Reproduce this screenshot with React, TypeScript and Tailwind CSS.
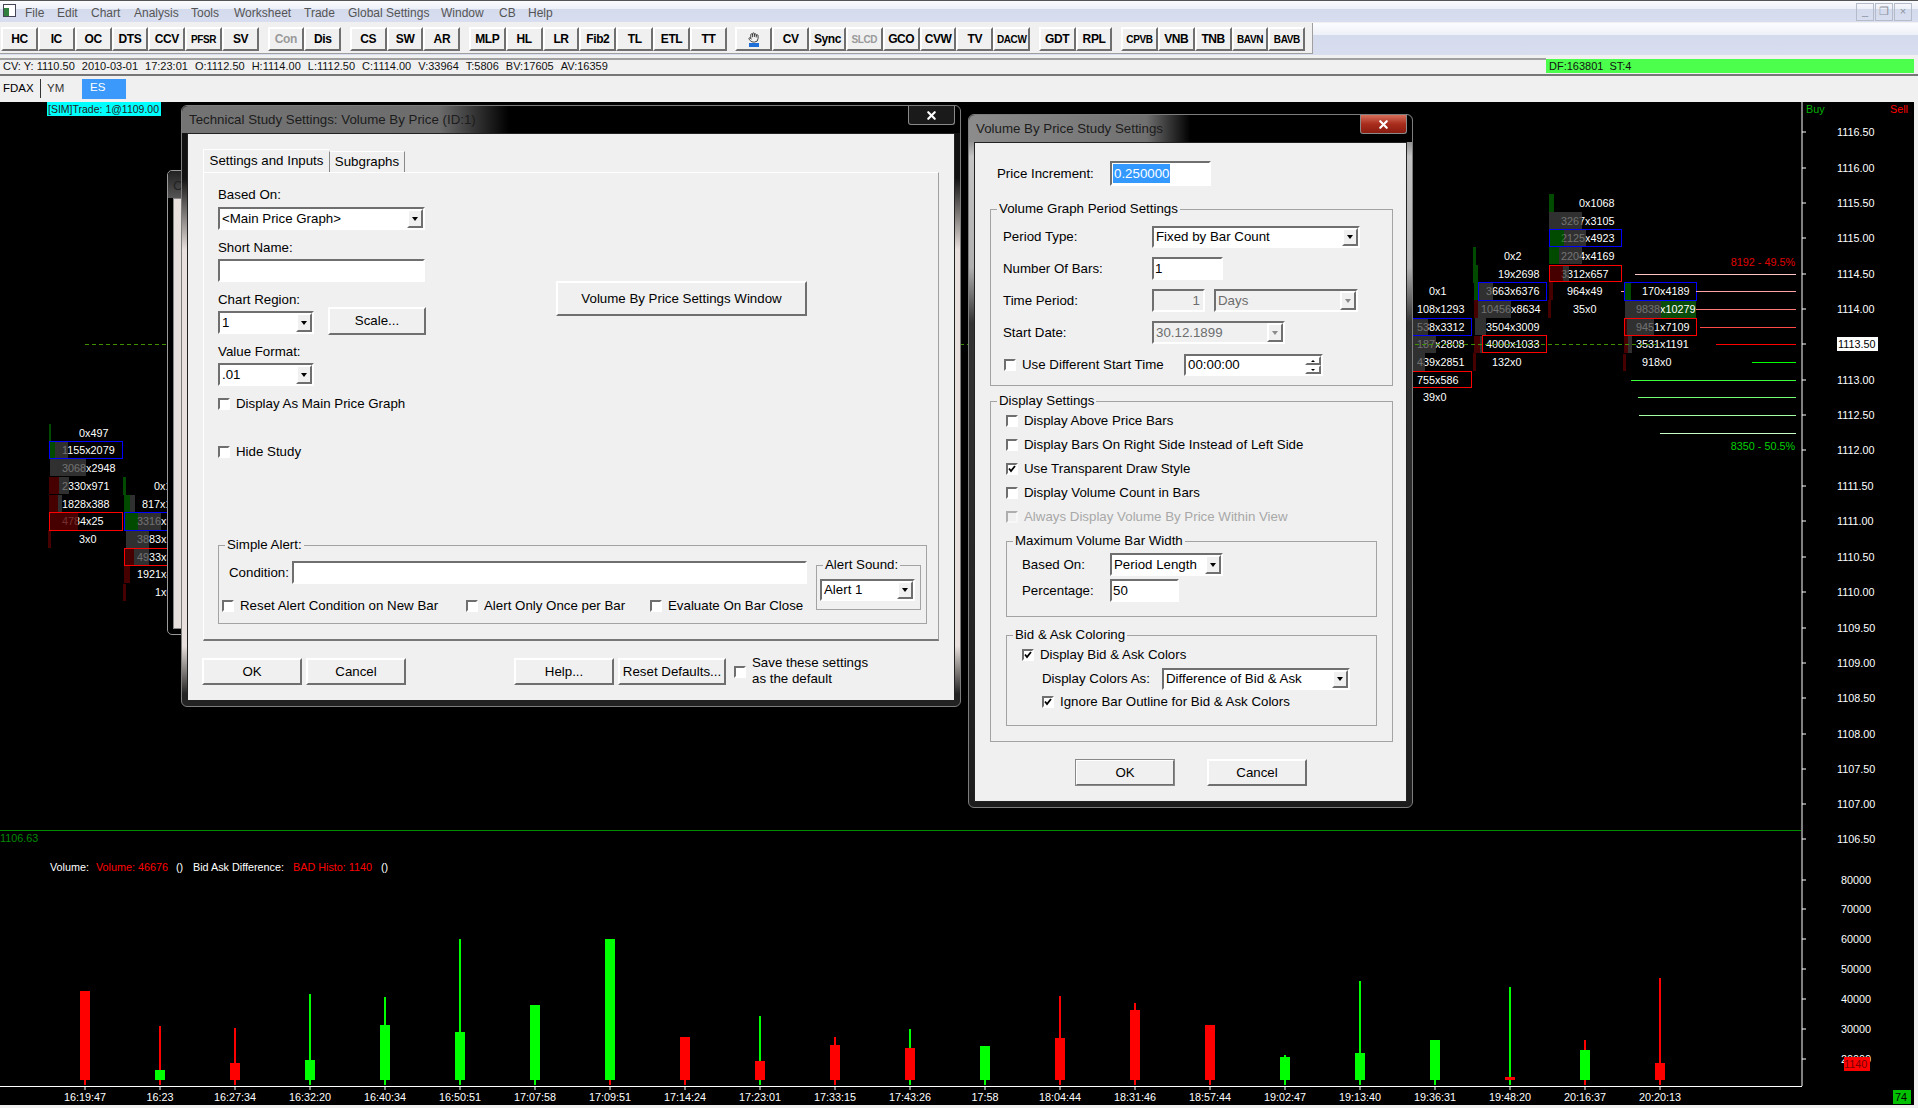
import type { ReactNode } from "react";
import { X, Hand } from "lucide-react";

const FONT = "font-['Liberation_Sans',Arial,sans-serif]";

// ── Price and volume data ─────────────────────────────────────────────
const priceLabels = [
  ["1116.50", 132], ["1116.00", 168], ["1115.50", 203], ["1115.00", 238], ["1114.50", 274],
  ["1114.00", 309], ["1113.00", 380], ["1112.50", 415], ["1112.00", 450], ["1111.50", 486],
  ["1111.00", 521], ["1110.50", 557], ["1110.00", 592], ["1109.50", 628], ["1109.00", 663],
  ["1108.50", 698], ["1108.00", 734], ["1107.50", 769], ["1107.00", 804], ["1106.50", 839],
] as const;

const volumeLabels = [
  ["80000", 880], ["70000", 909], ["60000", 939], ["50000", 969],
  ["40000", 999], ["30000", 1029], ["20000", 1059],
] as const;

const RED = "#ff0000";
const GREEN = "#00ff00";

// time, body colour, body top, wick colour, wick top, lower tick colour
const volumeBars: [string, string, number, string, number | null, string][] = [
  ["16:19:47", RED, 991, RED, null, RED],
  ["16:23", GREEN, 1070, RED, 1026, RED],
  ["16:27:34", RED, 1063, RED, 1028, RED],
  ["16:32:20", GREEN, 1060, GREEN, 994, GREEN],
  ["16:40:34", GREEN, 1025, GREEN, 997, GREEN],
  ["16:50:51", GREEN, 1032, GREEN, 939, GREEN],
  ["17:07:58", GREEN, 1005, GREEN, null, GREEN],
  ["17:09:51", GREEN, 939, GREEN, null, RED],
  ["17:14:24", RED, 1037, RED, null, RED],
  ["17:23:01", RED, 1061, GREEN, 1016, GREEN],
  ["17:33:15", RED, 1045, RED, 1037, RED],
  ["17:43:26", RED, 1048, GREEN, 1029, GREEN],
  ["17:58", GREEN, 1046, GREEN, null, GREEN],
  ["18:04:44", RED, 1038, RED, 996, RED],
  ["18:31:46", RED, 1010, RED, 1003, RED],
  ["18:57:44", RED, 1025, RED, null, RED],
  ["19:02:47", GREEN, 1057, GREEN, 1055, GREEN],
  ["19:13:40", GREEN, 1053, GREEN, 981, GREEN],
  ["19:36:31", GREEN, 1040, GREEN, null, GREEN],
  ["19:48:20", RED, 1077, GREEN, 987, GREEN],
  ["20:16:37", GREEN, 1050, RED, 1040, RED],
  ["20:20:13", RED, 1063, RED, 978, RED],
];

// ── Footprint cells ───────────────────────────────────────────────────
const cellTexts: [string, number, number][] = [
  ["0x497", 79, 433], ["1155x2079", 62, 450], ["3068x2948", 62, 468], ["2330x971", 62, 486],
  ["1828x388", 62, 504], ["4784x25", 62, 521], ["3x0", 79, 539],
  ["0x1", 154, 486], ["817x1", 142, 504], ["3316x5", 137, 521], ["3883x2", 137, 539],
  ["4933x3", 137, 557], ["1921x4", 137, 574], ["1x0", 155, 592],
  ["0x1", 1429, 291], ["108x1293", 1417, 309], ["538x3312", 1417, 327], ["187x2808", 1417, 344],
  ["439x2851", 1417, 362], ["755x586", 1417, 380], ["39x0", 1423, 397],
  ["0x2", 1504, 256], ["19x2698", 1498, 274], ["3663x6376", 1486, 291], ["10456x8634", 1481, 309],
  ["3504x3009", 1486, 327], ["4000x1033", 1486, 344], ["132x0", 1492, 362],
  ["0x1068", 1579, 203], ["3267x3105", 1561, 221], ["2125x4923", 1561, 238], ["2204x4169", 1561, 256],
  ["3312x657", 1561, 274], ["964x49", 1567, 291], ["35x0", 1573, 309],
  ["170x4189", 1642, 291], ["9838x10279", 1636, 309], ["9451x7109", 1636, 327],
  ["3531x1191", 1636, 344], ["918x0", 1642, 362],
];

const DG = "#005c00";
const DR = "#560000";
const GY = "#404040";

// x1, x2, y1, y2, colour
const cellBars: [number, number, number, number, string][] = [
  [49, 51, 424, 441, DG], [50, 55, 441, 458, DG], [55, 68, 441, 458, GY], [50, 86, 459, 476, GY],
  [49, 59, 477, 494, DR], [59, 69, 477, 494, GY], [49, 58, 495, 512, DR], [58, 62, 495, 512, GY],
  [49, 78, 512, 530, DR], [48, 51, 530, 548, DR],
  [123, 126, 477, 495, DG], [124, 130, 495, 512, DG], [130, 135, 495, 512, GY], [124, 138, 512, 530, DG],
  [138, 161, 512, 530, GY], [126, 149, 530, 548, GY], [124, 134, 548, 565, DR], [134, 149, 548, 565, GY],
  [124, 130, 566, 583, DR], [123, 126, 584, 601, DR],
  [1413, 1428, 318, 336, GY], [1413, 1436, 336, 353, GY], [1413, 1425, 353, 371, GY],
  [1473, 1476, 247, 265, DG], [1473, 1478, 265, 283, DG], [1474, 1479, 283, 300, DG], [1479, 1493, 283, 300, GY],
  [1474, 1478, 300, 318, DR], [1478, 1511, 300, 318, GY], [1475, 1486, 318, 335, GY],
  [1474, 1480, 336, 353, DR], [1480, 1483, 336, 353, GY], [1473, 1476, 353, 371, DR],
  [1549, 1554, 194, 212, DG], [1549, 1582, 212, 229, GY], [1549, 1564, 229, 246, DG], [1564, 1586, 229, 246, GY],
  [1549, 1559, 247, 264, DG], [1559, 1582, 247, 264, GY], [1549, 1563, 265, 281, DR], [1563, 1569, 265, 281, GY],
  [1549, 1553, 282, 300, DR], [1548, 1551, 300, 318, DR],
  [1624, 1631, 282, 300, DG], [1625, 1661, 300, 318, GY],
  [1624, 1627, 318, 335, DR], [1627, 1654, 318, 335, GY], [1624, 1628, 336, 353, DR], [1628, 1632, 336, 353, GY],
  [1623, 1626, 354, 371, DR],
];

// x1, x2, y1, y2, colour
const cellBoxes: [number, number, number, number, string][] = [
  [49, 122, 441, 458, "#0000ff"], [49, 122, 512, 530, RED], [124, 180, 512, 530, "#0000ff"], [124, 180, 548, 565, RED],
  [1405, 1471, 318, 335, "#0000ff"], [1405, 1471, 371, 387, RED],
  [1478, 1546, 282, 300, "#0000ff"], [1482, 1546, 335, 352, RED],
  [1549, 1621, 229, 246, "#0000ff"], [1549, 1621, 265, 281, RED],
  [1624, 1696, 282, 300, "#0000ff"], [1624, 1696, 318, 335, RED],
];

// y, start x, colour
const profileLines: [number, number, string][] = [
  [274, 1635, "#ffc4c4"], [291, 1696, "#ffa4a4"], [309, 1696, "#ff7a7a"], [327, 1700, "#ff4a4a"],
  [344, 1716, RED], [362, 1752, GREEN], [380, 1631, "#3cff3c"], [397, 1638, "#74ff74"],
  [415, 1639, "#a4ffa4"], [433, 1660, "#c8ffc8"],
];

function ChartCanvas() {
  return (
    <svg className={`absolute left-0 top-0 ${FONT} text-[10.8px]`} width={1914} height={1003} viewBox="0 102 1914 1003">
      <rect x={47} y={102} width={114} height={14} fill="#00ffff" />
      <text x={48} y={113} fill="#222" fontSize={10.5}>[SIM]Trade: 1@1109.00</text>

      {/* axis */}
      <line x1={1802} y1={102} x2={1802} y2={1086} stroke="#fff" />
      <text x={1806} y={113} fill="#00b000">Buy</text>
      <text x={1908} y={113} fill={RED} textAnchor="end">Sell</text>
      {priceLabels.map(([label, y]) => (
        <g key={label}>
          <line x1={1802} y1={y} x2={1806} y2={y} stroke="#fff" />
          <text x={1837} y={y + 4} fill="#fff">{label}</text>
        </g>
      ))}
      <line x1={1802} y1={344} x2={1806} y2={344} stroke="#fff" />
      <rect x={1837} y={337} width={41} height={14} fill="#fff" />
      <text x={1838} y={348} fill="#000">1113.50</text>

      {/* footprint: the solid green bar lies under its text, the others over it */}
      <rect x={1661} y={300} width={35} height={18} fill="#0a4d0a" />
      {cellTexts.map(([t, x, y], i) => (
        <text key={i} x={x} y={y + 4} fill="#fff">{t}</text>
      ))}
      {cellBars.map(([x1, x2, y1, y2, c], i) => (
        <rect key={i} x={x1} y={y1} width={x2 - x1} height={y2 - y1} fill={c} fillOpacity={c === GY ? 0.75 : 0.82} />
      ))}
      {cellBoxes.map(([x1, x2, y1, y2, c], i) => (
        <rect key={i} x={x1 + 0.5} y={y1 + 0.5} width={x2 - x1} height={y2 - y1} fill="none" stroke={c} />
      ))}
      {profileLines.map(([y, x, c]) => (
        <line key={y} x1={x} y1={y + 0.5} x2={1796} y2={y + 0.5} stroke={c} />
      ))}
      <line x1={1621} y1={291.5} x2={1624} y2={291.5} stroke="#ffa4a4" />
      <line x1={85} y1={344.5} x2={1660} y2={344.5} stroke="#3f8f00" strokeDasharray="4 3" />
      <text x={1795} y={266} fill="#e00000" textAnchor="end">8192 - 49.5%</text>
      <text x={1795} y={450} fill="#00d000" textAnchor="end">8350 - 50.5%</text>

      {/* volume region */}
      <line x1={0} y1={830.5} x2={1801} y2={830.5} stroke="#008a00" />
      <text x={0} y={842} fill="#008a00">1106.63</text>
      <text x={50} y={871} fill="#fff">Volume:</text>
      <text x={96} y={871} fill={RED}>Volume: 46676</text>
      <text x={176} y={871} fill="#fff">()</text>
      <text x={193} y={871} fill="#fff">Bid Ask Difference:</text>
      <text x={293} y={871} fill={RED}>BAD Histo: 1140</text>
      <text x={381} y={871} fill="#fff">()</text>

      {volumeLabels.map(([label, y]) => (
        <g key={label}>
          <line x1={1802} y1={y} x2={1806} y2={y} stroke="#fff" />
          <text x={1841} y={y + 4} fill="#fff">{label}</text>
        </g>
      ))}
      <rect x={1844} y={1057} width={26} height={14} fill={RED} />
      <text x={1844} y={1068} fill="#700">1140</text>

      {volumeBars.map(([time, body, top, wick, wickTop, low], i) => {
        const x = 85 + i * 75;
        return (
          <g key={time}>
            {wickTop !== null && <rect x={x - 1} y={wickTop} width={2} height={top - wickTop} fill={wick} />}
            <rect x={x - 5} y={top} width={10} height={1080 - top} fill={body} />
            <rect x={x - 1} y={1080} width={2} height={5} fill={low} />
            <line x1={x} y1={1086} x2={x} y2={1090} stroke="#fff" />
            <text x={x} y={1101} fill="#fff" textAnchor="middle">{time}</text>
          </g>
        );
      })}
      <line x1={0} y1={1086.5} x2={1802} y2={1086.5} stroke="#fff" />
      <rect x={1893} y={1090} width={18} height={14} fill="#00c000" />
      <text x={1895} y={1101} fill="#000">74</text>
    </svg>
  );
}

// ── Win32 style controls ──────────────────────────────────────────────
const SUNKEN = "border-2 border-t-[#6f6f6f] border-l-[#6f6f6f] border-r-white border-b-white";
const RAISED = "border-2 border-t-white border-l-white border-r-[#6f6f6f] border-b-[#6f6f6f]";

function Field({ w, h = 23, value, disabled, right }: { w: number; h?: number; value?: ReactNode; disabled?: boolean; right?: boolean }) {
  return (
    <div
      style={{ width: w, height: h }}
      className={`${SUNKEN} flex items-center px-[1px] shrink-0 whitespace-nowrap ${disabled ? "bg-[#f0f0f0] text-[#6d6d6d]" : "bg-white"} ${right ? "justify-end pr-[3px]" : ""}`}
    >
      {value}
    </div>
  );
}

function Combo({ w, h = 23, value, disabled }: { w: number; h?: number; value: string; disabled?: boolean }) {
  return (
    <div
      style={{ width: w, height: h }}
      className={`${SUNKEN} flex items-center justify-between shrink-0 whitespace-nowrap pl-[2px] ${disabled ? "bg-[#f0f0f0] text-[#6d6d6d]" : "bg-white"}`}
    >
      <span>{value}</span>
      <span className={`${RAISED} bg-[#f0f0f0] h-full w-[16px] flex items-center justify-center`}>
        <span className={`block w-0 h-0 border-x-[3.5px] border-x-transparent border-t-[4px] ${disabled ? "border-t-[#8a8a8a]" : "border-t-black"}`} />
      </span>
    </div>
  );
}

function Check({ label, checked, disabled }: { label?: string; checked?: boolean; disabled?: boolean }) {
  return (
    <div className={`flex items-center gap-[6px] h-[16px] whitespace-nowrap ${disabled ? "text-[#a8a8a8]" : ""}`}>
      <span className={`${SUNKEN} ${disabled ? "bg-[#f0f0f0] opacity-50" : "bg-white"} w-[12px] h-[12px] shrink-0 flex items-center justify-center`}>
        {checked && (
          <svg width="8" height="8" viewBox="0 0 8 8">
            <path d="M1 3.5 L3 6 L7 1" fill="none" stroke="#000" strokeWidth="1.8" />
          </svg>
        )}
      </span>
      {label}
    </div>
  );
}

function Btn({ w, h = 27, label, dark }: { w: number; h?: number; label: string; dark?: boolean }) {
  return (
    <div
      style={{ width: w, height: h }}
      className={`${RAISED} ${dark ? "outline outline-1 outline-[#888] -outline-offset-1" : ""} bg-[#f0f0f0] shrink-0 flex items-center justify-center whitespace-nowrap`}
    >
      {label}
    </div>
  );
}

function Group({ title, w, h, className = "", children }: { title: string; w: number; h: number; className?: string; children: ReactNode }) {
  return (
    <div style={{ width: w, height: h }} className={`relative border border-[#a3a3a3] shrink-0 ${className}`}>
      <span className="absolute -top-[9px] left-[6px] bg-[#f0f0f0] px-[2px] whitespace-nowrap leading-[16px]">{title}</span>
      {children}
    </div>
  );
}

function Window({
  title, className, frame, glow, closeClass, children,
}: {
  title: string; className: string; frame: string; glow: string; closeClass: string; children: ReactNode;
}) {
  return (
    <div className={`absolute flex flex-col rounded-[6px] border border-[#7d7d7d] px-[5px] pb-[5px] ${frame} ${className}`}>
      <div className={`relative h-[27px] -mx-[5px] px-[7px] pt-[4px] shrink-0 rounded-t-[6px] text-[#1c1c1c] ${glow}`}>
        {title}
        <div className={`absolute right-[5px] top-0 w-[47px] h-[19px] rounded-b-[3px] border border-t-0 border-[#8a8a8a] flex items-center justify-center ${closeClass}`}>
          <X size={13} strokeWidth={4} color="#fff" />
        </div>
      </div>
      <div className="flex-1 border border-[#222] bg-[#f0f0f0] text-black flex flex-col">{children}</div>
    </div>
  );
}

// ── Technical Study Settings dialog ───────────────────────────────────
function StudySettings() {
  return (
    <Window
      title="Technical Study Settings: Volume By Price (ID:1)"
      className="left-[181px] top-[3px] w-[780px] h-[602px]"
      frame="bg-[linear-gradient(to_bottom,#111_0,#111_12%,#e8e0dc_24%,#e8e0dc_90%,#222_98%)]"
      glow="bg-[linear-gradient(to_right,#747474,#6c6c6c_33%,#000_42%)]"
      closeClass="bg-[#1a1a1a]"
    >
      <div className="ml-[15px] mt-[15px] flex items-end h-[23px]">
        <div className="h-[23px] w-[126px] border-l border-t border-white flex items-center justify-center whitespace-nowrap">Settings and Inputs</div>
        <div className="h-[21px] w-[76px] border-t border-r border-l border-t-white border-r-[#888] border-l-[#888] flex items-center justify-center">Subgraphs</div>
      </div>

      <div className="ml-[15px] w-[736px] h-[469px] border border-t-white border-l-white border-r-[#a0a0a0] border-b-[#777] border-b-2">
        <div className="flex h-[372px] pl-[14px]">
          <div className="w-[338px] flex flex-col">
            <div className="mt-[14px] h-[15px] leading-[15px]">Based On:</div>
            <div className="mt-[5px]"><Combo w={207} value="<Main Price Graph>" /></div>
            <div className="mt-[10px] h-[15px] leading-[15px]">Short Name:</div>
            <div className="mt-[4px]"><Field w={207} /></div>
            <div className="mt-[10px] h-[15px] leading-[15px]">Chart Region:</div>
            <div className="flex items-start h-[28px]">
              <div className="mt-[4px]"><Combo w={96} value="1" /></div>
              <div className="ml-[14px]"><Btn w={98} h={28} label="Scale..." /></div>
            </div>
            <div className="mt-[9px] h-[15px] leading-[15px]">Value Format:</div>
            <div className="mt-[4px]"><Combo w={96} value=".01" /></div>
            <div className="mt-[10px]"><Check label="Display As Main Price Graph" /></div>
            <div className="mt-[32px]"><Check label="Hide Study" /></div>
          </div>
          <div className="mt-[108px]"><Btn w={251} h={35} label="Volume By Price Settings Window" /></div>
        </div>

        <Group title="Simple Alert:" w={709} h={79} className="ml-[14px] flex">
          <div className="w-[597px]">
            <div className="mt-[15px] pl-[10px] flex items-center">
              <span className="w-[63px]">Condition:</span>
              <Field w={515} />
            </div>
            <div className="mt-[14px] pl-[3px] flex">
              <div className="w-[244px]"><Check label="Reset Alert Condition on New Bar" /></div>
              <div className="w-[184px]"><Check label="Alert Only Once per Bar" /></div>
              <Check label="Evaluate On Bar Close" />
            </div>
          </div>
          <Group title="Alert Sound:" w={105} h={45} className="mt-[19px]">
            <div className="mt-[13px] ml-[3px]"><Combo w={95} h={22} value="Alert 1" /></div>
          </Group>
        </Group>
      </div>

      <div className="ml-[14px] mt-[17px] flex items-start">
        <Btn w={100} label="OK" />
        <div className="ml-[4px]"><Btn w={100} label="Cancel" /></div>
        <div className="ml-[108px]"><Btn w={100} label="Help..." /></div>
        <div className="ml-[4px]"><Btn w={108} label="Reset Defaults..." /></div>
        <div className="ml-[8px] mt-[6px]"><Check /></div>
        <div className="leading-[16px] mt-[-3px] ml-[6px] whitespace-nowrap">Save these settings<br />as the default</div>
      </div>
    </Window>
  );
}

// ── Volume By Price dialog ────────────────────────────────────────────
function VolumeSettings() {
  return (
    <Window
      title="Volume By Price Study Settings"
      className="left-[968px] top-[12px] w-[445px] h-[694px]"
      frame="bg-[linear-gradient(to_bottom,#333_0,#c4c4c4_6%,#b0b0b0_22%,#333_30%,#1c1c1c_100%)]"
      glow="bg-[linear-gradient(to_right,#8c8c8c,#707070_40%,#000_50%)]"
      closeClass="bg-[linear-gradient(to_bottom,#d8705c,#a82c1c_50%,#8a1c10)]"
    >
      <div className="mt-[18px] ml-[22px] flex items-center">
        <span className="w-[113px]">Price Increment:</span>
        <Field w={101} h={25} value={<span className="bg-[#3399ff] text-white px-[1px]">0.250000</span>} />
      </div>

      <Group title="Volume Graph Period Settings" w={403} h={177} className="mt-[23px] ml-[15px]">
        <div className="pl-[12px] mt-[16px] flex items-center">
          <span className="w-[149px]">Period Type:</span>
          <Combo w={208} h={22} value="Fixed by Bar Count" />
        </div>
        <div className="pl-[12px] mt-[9px] flex items-center">
          <span className="w-[149px]">Number Of Bars:</span>
          <Field w={71} value="1" />
        </div>
        <div className="pl-[12px] mt-[9px] flex items-center">
          <span className="w-[149px]">Time Period:</span>
          <Field w={53} value="1" disabled right />
          <div className="ml-[9px]"><Combo w={144} value="Days" disabled /></div>
        </div>
        <div className="pl-[12px] mt-[9px] flex items-center">
          <span className="w-[149px]">Start Date:</span>
          <Combo w={133} value="30.12.1899" disabled />
        </div>
        <div className="pl-[13px] mt-[10px] flex items-center">
          <div className="w-[180px]"><Check label="Use Different Start Time" /></div>
          <div className={`${SUNKEN} w-[139px] h-[22px] bg-white flex items-center justify-between pl-[2px]`}>
            00:00:00
            <span className="w-[16px] h-full flex flex-col">
              <span className={`${RAISED} flex-1 flex items-center justify-center`}>
                <span className="block w-0 h-0 border-x-[2px] border-x-transparent border-b-[2px] border-b-black" />
              </span>
              <span className={`${RAISED} flex-1 flex items-center justify-center`}>
                <span className="block w-0 h-0 border-x-[2px] border-x-transparent border-t-[2px] border-t-black" />
              </span>
            </span>
          </div>
        </div>
      </Group>

      <Group title="Display Settings" w={403} h={341} className="mt-[15px] ml-[15px]">
        <div className="mt-[7px] pl-[15px] flex flex-col">
          <div className="h-[24px] flex items-center"><Check label="Display Above Price Bars" /></div>
          <div className="h-[24px] flex items-center"><Check label="Display Bars On Right Side Instead of Left Side" /></div>
          <div className="h-[24px] flex items-center"><Check label="Use Transparent Draw Style" checked /></div>
          <div className="h-[24px] flex items-center"><Check label="Display Volume Count in Bars" /></div>
          <div className="h-[24px] flex items-center"><Check label="Always Display Volume By Price Within View" disabled /></div>
        </div>

        <Group title="Maximum Volume Bar Width" w={371} h={76} className="mt-[12px] ml-[15px]">
          <div className="mt-[11px] pl-[15px] flex items-center">
            <span className="w-[88px]">Based On:</span>
            <Combo w={113} value="Period Length" />
          </div>
          <div className="mt-[3px] pl-[15px] flex items-center">
            <span className="w-[88px]">Percentage:</span>
            <Field w={69} value="50" />
          </div>
        </Group>

        <Group title="Bid & Ask Coloring" w={371} h={91} className="mt-[18px] ml-[15px]">
          <div className="mt-[11px] pl-[15px]"><Check label="Display Bid & Ask Colors" checked /></div>
          <div className="mt-[5px] pl-[35px] flex items-center">
            <span className="w-[120px]">Display Colors As:</span>
            <Combo w={188} h={22} value="Difference of Bid & Ask" />
          </div>
          <div className="mt-[4px] pl-[35px]"><Check label="Ignore Bar Outline for Bid & Ask Colors" checked /></div>
        </Group>
      </Group>

      <div className="mt-[17px] ml-[100px] flex gap-[32px]">
        <Btn w={100} label="OK" dark />
        <Btn w={100} label="Cancel" />
      </div>
    </Window>
  );
}

// ── Top of the application window ─────────────────────────────────────
const menuItems: [string, number][] = [
  ["File", 25], ["Edit", 57], ["Chart", 91], ["Analysis", 134], ["Tools", 191], ["Worksheet", 234],
  ["Trade", 304], ["Global Settings", 348], ["Window", 441], ["CB", 499], ["Help", 528],
];

const toolbarGroups: { label: string; small?: boolean; off?: boolean; hand?: boolean }[][] = [
  [{ label: "HC" }, { label: "IC" }, { label: "OC" }, { label: "DTS" }, { label: "CCV" }, { label: "PFSR", small: true }, { label: "SV" }],
  [{ label: "Con", off: true }, { label: "Dis" }],
  [{ label: "CS" }, { label: "SW" }, { label: "AR" }],
  [{ label: "MLP" }, { label: "HL" }, { label: "LR" }, { label: "Fib2" }, { label: "TL" }, { label: "ETL" }, { label: "TT" }],
  [{ label: "", hand: true }, { label: "CV" }, { label: "Sync" }, { label: "SLCD", small: true, off: true }, { label: "GCO" }, { label: "CVW" }, { label: "TV" }, { label: "DACW", small: true }],
  [{ label: "GDT" }, { label: "RPL" }],
  [{ label: "CPVB", small: true }, { label: "VNB" }, { label: "TNB" }, { label: "BAVN", small: true }, { label: "BAVB", small: true }],
];

const infoParts = [
  "CV: Y: 1110.50", "2010-03-01", "17:23:01", "O:1112.50", "H:1114.00", "L:1112.50",
  "C:1114.00", "V:33964", "T:5806", "BV:17605", "AV:16359",
];

const GLASS = "bg-[linear-gradient(to_bottom,#fbfcfe,#eef1f8_36%,#d4dbed_38%,#d8deef)]";

function MenuBar() {
  return (
    <div className={`h-[22px] border-t border-[#555] ${GLASS} flex items-center relative text-[12px] text-[#555]`}>
      <div className="absolute left-[3px] top-[3px] w-[13px] h-[13px] border border-[#445] bg-white flex items-end">
        <span className="w-[5px] h-[8px] bg-[#2f7f3f]" />
      </div>
      {menuItems.map(([label, x]) => (
        <span key={label} className="absolute top-[3px]" style={{ left: x }}>{label}</span>
      ))}
      <div className="ml-auto mr-[6px] flex gap-[1px]">
        {["_", "❐", "×"].map((c) => (
          <span key={c} className="w-[18px] h-[18px] border border-[#b4bcc9] flex items-center justify-center text-[11px] text-[#8a93a0]">{c}</span>
        ))}
      </div>
    </div>
  );
}

function Toolbar() {
  return (
    <div className={`h-[32px] mt-[1px] flex ${GLASS}`}>
      <div className="w-[1313px] h-[31px] bg-[#f0f0f0] border-r border-b border-[#9f9f9f] flex items-center pl-[1px] pt-[2px] gap-[8.6px]">
        {toolbarGroups.map((group, i) => (
          <div key={i} className="flex">
            {group.map((b, j) => (
              <div
                key={j}
                className={`${RAISED} w-[36.85px] h-[24px] bg-[#f0f0f0] flex items-center justify-center font-bold tracking-[-0.4px] ${b.small ? "text-[10px]" : "text-[12px]"} ${b.off ? "text-[#9a9a9a]" : "text-black"}`}
              >
                {b.hand ? (
                  <span className="flex flex-col items-center">
                    <Hand size={11} color="#333" />
                    <span className="block w-[10px] h-[4px] bg-[#1f6fd8]" />
                  </span>
                ) : (
                  b.label
                )}
              </div>
            ))}
          </div>
        ))}
      </div>
    </div>
  );
}

function InfoBar() {
  return (
    <div className="mt-[3px] h-[18px] flex border-b-2 border-[#777] text-[11px] text-[#111]">
      <div className="w-[1546px] border-t-2 border-[#a0a0a0] pl-[3px] leading-[13px] flex gap-[7px] whitespace-nowrap">
        {infoParts.map((p) => (
          <span key={p}>{p}</span>
        ))}
      </div>
      <div className="w-[368px] h-[14px] mt-[1px] bg-[#4dff4d] pl-[3px] leading-[14px] flex gap-[6px]">
        <span>DF:163801</span>
        <span>ST:4</span>
      </div>
    </div>
  );
}

function ChartTabs() {
  return (
    <div className="h-[26px] flex items-start pl-[3px] pt-[3px] text-[11.5px]">
      <span className="w-[38px] h-[19px] border-r border-[#333] flex items-center">FDAX</span>
      <span className="w-[41px] h-[19px] pl-[6px] flex items-center text-[#333]">YM</span>
      <span className="w-[44px] h-[20px] bg-[#3b99fc] text-white pl-[8px] leading-[16px]">ES</span>
    </div>
  );
}

export default function App() {
  return (
    <div className={`w-[1918px] h-[1108px] overflow-hidden bg-[#f0f0f0] flex flex-col ${FONT} text-[13.3px]`}>
      <MenuBar />
      <Toolbar />
      <InfoBar />
      <ChartTabs />
      <div className="relative w-[1914px] h-[1003px] bg-black shrink-0">
        <ChartCanvas />
        {/* chart settings window hidden behind the study dialog */}
        <div className="absolute left-[167px] top-[68px] w-[30px] h-[465px] rounded-[5px] border border-[#9a9a9a] bg-black pt-[27px] px-[5px] pb-[5px]">
          <div className="absolute left-0 top-0 w-full h-[27px] rounded-t-[5px] bg-[linear-gradient(to_bottom,#222,#555)] pl-[5px] pt-[5px] text-[#222]">C</div>
          <div className="h-full border border-[#888] bg-[#e8e0dc]" />
        </div>
        <StudySettings />
        <VolumeSettings />
      </div>
    </div>
  );
}
